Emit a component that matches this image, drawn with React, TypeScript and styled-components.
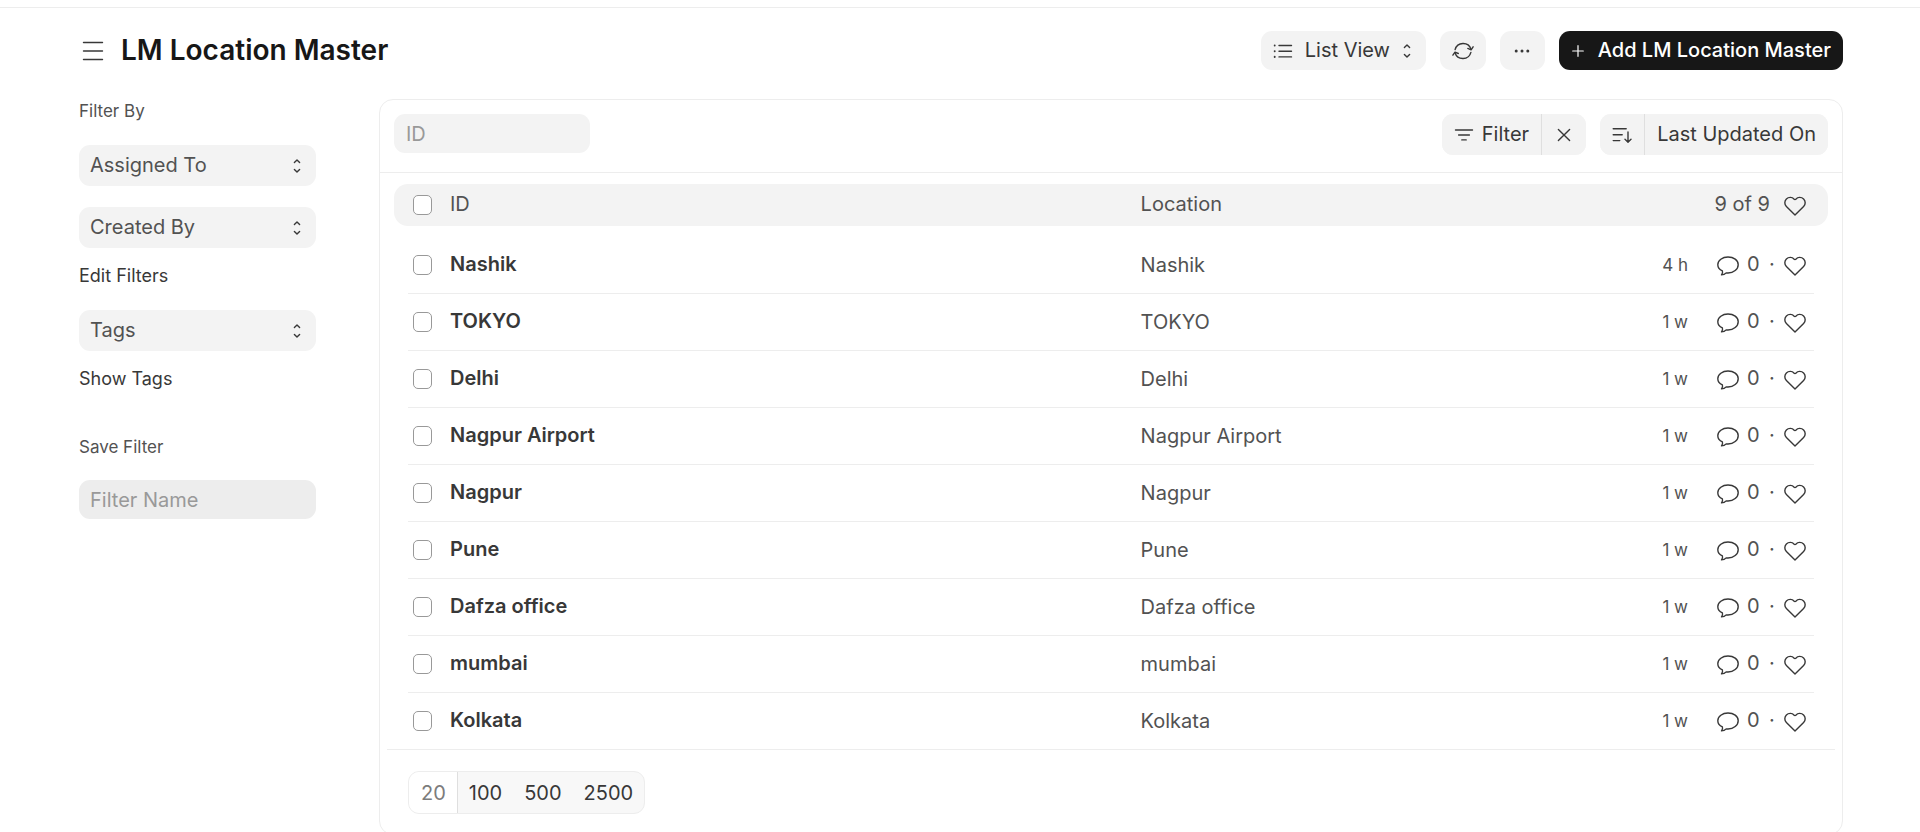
import React from "react";
import styled, { createGlobalStyle, css } from "styled-components";

const GlobalStyle = createGlobalStyle`
  *, *::before, *::after { box-sizing: border-box; }
  body {
    margin: 0;
    background: #fff;
    color: #383838;
    font-family: Inter, "Liberation Sans", sans-serif;
    font-size: 20px;
    line-height: 28px;
  }
  button, input, select { font: inherit; color: inherit; margin: 0; }
  svg { display: block; flex: none; }
`;

const Icon = styled.svg.attrs({ fill: "none", "aria-hidden": true })`
  stroke: currentColor;
  stroke-width: 1.4;
  stroke-linecap: round;
  stroke-linejoin: round;
`;

const MenuIcon = () => (
  <Icon width="22" height="22" viewBox="0 0 22 22">
    <path d="M1.5 2.5h19M1.5 11h19M1.5 19.5h19" />
  </Icon>
);

const ListIcon = () => (
  <Icon width="20" height="20" viewBox="0 0 20 20">
    <path d="M6 4.5h12.5M6 10.2h12.5M6 15.9h12.5" />
    <path d="M1.7 4.4v.2M1.7 10.1v.2M1.7 15.8v.2" strokeWidth="1.9" />
  </Icon>
);

const ChevronsIcon = () => (
  <Icon width="8" height="16" viewBox="0 0 8 16">
    <path d="M1.4 4.6 4 2l2.6 2.6M1.4 11.4 4 14l2.6-2.6" />
  </Icon>
);

const RefreshIcon = () => (
  <Icon width="22" height="22" viewBox="0 0 22 22">
    <path d="M3.1 9.6A8.3 8.3 0 0 1 19 9.2M18.9 12.4A8.3 8.3 0 0 1 3 12.8" />
    <path d="m15.8 8.4 3.3 1.4 2-3M6.3 13.5 3 12.1l-2.1 3" />
  </Icon>
);

const DotsIcon = () => (
  <Icon width="16" height="6" viewBox="0 0 16 6">
    <path d="M2.2 3h.01M8 3h.01M13.8 3h.01" strokeWidth="3" />
  </Icon>
);

const PlusIcon = () => (
  <Icon width="12" height="12" viewBox="0 0 12 12">
    <path d="M6 .7v10.6M.7 6h10.6" strokeWidth="1.2" />
  </Icon>
);

const FilterIcon = () => (
  <Icon width="20" height="14" viewBox="0 0 20 14">
    <path d="M1.5 2h17M4.6 7h10.8M7.800 11.900h4.400" />
  </Icon>
);

const CloseIcon = () => (
  <Icon width="14" height="14" viewBox="0 0 14 14">
    <path d="m1.4 1.4 11.2 11.2M12.6 1.4 1.4 12.6" />
  </Icon>
);

const SortIcon = () => (
  <Icon width="20" height="16" viewBox="0 0 20 16">
    <path d="M1.2 1.8h13M1.2 7.8h9M1.2 13.6h6.6M16 5v10M13 12.3l3 2.9 3-2.9" />
  </Icon>
);

const HeartIcon = () => (
  <Icon width="22" height="20" viewBox="0 0 22 20">
    <path d="M11 19 2.4 10.6C.3 8.5.3 5 2.4 2.9 4.6.7 8.3.9 9.9 3Q11 4.2 12.1 3C13.7.9 17.4.7 19.6 2.9c2.1 2.1 2.1 5.6 0 7.7Z" />
  </Icon>
);

const CommentIcon = () => (
  <Icon width="22" height="20" viewBox="0 0 22 20">
    <path d="M11 1C5.4 1 .8 4.4.8 8.7c0 2.7 1.8 4.900 4.600 6.200.4 1.400.2 2.800-.9 4 1.900 0 3.700-.9 4.700-2 .6.1 1.200.1 1.800.1 5.600 0 10.200-3.800 10.200-8.300S16.600 1 11 1Z" />
  </Icon>
);

const Page = styled.div`
  padding-top: 7px;
`;

const Shell = styled.div`
  border-top: 1px solid #ededed;
  padding: 23px 77px 0 79px;
`;

const PageHead = styled.header`
  display: flex;
  align-items: center;
  justify-content: space-between;
  height: 39px;
`;

const TitleGroup = styled.div`
  display: flex;
  align-items: center;
  gap: 17px;
  padding-left: 3px;
`;

const Title = styled.h1`
  margin: 0;
  padding-bottom: 2px;
  font-size: 28px;
  line-height: 36px;
  font-weight: 600;
  color: #171717;
`;

const PlainButton = styled.button`
  display: flex;
  padding: 0;
  border: 0;
  background: none;
  cursor: pointer;
`;

const Actions = styled.div`
  display: flex;
  gap: 14px;
`;

const Label = styled.span`
  padding-bottom: 2px;
`;

const control = css`
  display: flex;
  align-items: center;
  justify-content: center;
  border: 0;
  background: #f3f3f3;
  cursor: pointer;
`;

const ToolButton = styled.button<{ $primary?: boolean }>`
  ${control}
  height: 39px;
  min-width: 45px;
  gap: 14px;
  padding: 0 12px;
  border-radius: 11px;
  ${(p) =>
    p.$primary &&
    css`
      padding-left: 13px;
      background: #171717;
      color: #fff;
      font-weight: 500;
    `}
`;

const SelectBox = styled.label<{ $tall?: boolean }>`
  display: flex;
  align-items: center;
  gap: 12px;
  height: ${(p) => (p.$tall ? 41 : 39)}px;
  padding: 0 15px 0 ${(p) => (p.$tall ? 11 : 12)}px;
  border-radius: 11px;
  background: #f3f3f3;
`;

const Select = styled.select<{ $muted?: boolean }>`
  flex: 1;
  min-width: 0;
  height: 100%;
  padding: 0 0 2px;
  border: 0;
  outline: 0;
  appearance: none;
  background: none;
  color: ${(p) => (p.$muted ? "#525252" : "#383838")};
  cursor: pointer;
`;

const Layout = styled.div`
  display: grid;
  grid-template-columns: 237px minmax(0, 1fr);
  column-gap: 63px;
  align-items: start;
  padding-top: 29px;
`;

const Sidebar = styled.aside`
  display: flex;
  flex-direction: column;
`;

const SideLabel = styled.div`
  font-size: 17px;
  line-height: 24px;
  color: #525252;
`;

const SideFilters = styled.div`
  display: flex;
  flex-direction: column;
  gap: 21px;
  padding-top: 22px;
`;

const SideLink = styled.a`
  align-self: flex-start;
  padding-top: 16px;
  font-size: 18px;
  line-height: 24px;
  color: #383838;
  text-decoration: none;
`;

const SaveFilter = styled.label`
  display: flex;
  flex-direction: column;
  gap: 21px;
  padding-top: 44px;
`;

const TextInput = styled.input<{ $dark?: boolean }>`
  width: ${(p) => (p.$dark ? "100%" : "196px")};
  height: 39px;
  padding: 0 ${(p) => (p.$dark ? 11 : 12)}px;
  border: 0;
  outline: 0;
  border-radius: 11px;
  background: ${(p) => (p.$dark ? "#ededed" : "#f3f3f3")};
  &::placeholder { color: #999; opacity: 1; }
`;

const Card = styled.main`
  border: 1px solid #ededed;
  border-radius: 14px;
`;

const FilterBar = styled.div`
  display: flex;
  justify-content: space-between;
  padding: 14px 14px 17px;
  border-bottom: 1px solid #ededed;
`;

const FilterActions = styled.div`
  display: flex;
  gap: 14px;
`;

const ButtonGroup = styled.div`
  display: flex;
  height: 41px;
  border-radius: 11px;
  overflow: hidden;
  background: #f3f3f3;
`;

const GroupButton = styled.button<{ $wide?: boolean }>`
  ${control}
  gap: 8px;
  padding: 0 ${(p) => (p.$wide ? 15 : 12)}px;
  & + & { border-left: 1px solid #dfdfdf; }
`;

const rowGrid = css`
  display: grid;
  grid-template-columns: 3fr 2fr 185px;
  align-items: center;
`;

const Table = styled.table`
  display: block;
  padding: 11px 14px 0;
  text-align: left;
`;

const Head = styled.thead`
  display: block;
  padding-bottom: 11px;
`;

const HeadRow = styled.tr`
  ${rowGrid}
  height: 42px;
  padding: 0 14px;
  border-radius: 14px;
  background: #f3f3f3;
  color: #525252;
`;

const Body = styled.tbody`
  display: block;
  padding: 0 14px;
`;

const Row = styled.tr`
  ${rowGrid}
  height: 57px;
  border-bottom: 1px solid #ededed;
  &:last-child { height: 56px; border-bottom: 0; }
`;

const HeadCell = styled.th<{ $end?: boolean }>`
  display: flex;
  align-items: center;
  gap: ${(p) => (p.$end ? 14 : 18)}px;
  justify-content: ${(p) => (p.$end ? "flex-end" : "flex-start")};
  padding: 0 ${(p) => (p.$end ? 8 : 0)}px 0 0;
  font-weight: 400;
`;

const Cell = styled.td`
  padding: 0;
  color: #525252;
`;

const SubjectCell = styled.th`
  display: flex;
  align-items: center;
  gap: 18px;
  padding: 0;
  font-weight: 600;
`;

const Lead = styled.label`
  display: flex;
  padding-left: 5px;
`;

const Checkbox = styled.input.attrs({ type: "checkbox" })`
  appearance: none;
  width: 19px;
  height: 20px;
  border: 1px solid #999;
  border-radius: 5px;
  background: #fff;
  &:checked { background: #171717; }
`;

const RecordLink = styled.a`
  padding-bottom: 2px;
  color: #383838;
  text-decoration: none;
`;

const MetaCell = styled.td`
  display: grid;
  grid-template-columns: 1fr 22px 30px 15px 22px;
  align-items: center;
  padding: 0 8px 0 0;
  color: #525252;
`;

const Age = styled.span`
  padding-right: 29px;
  font-size: 17px;
  text-align: right;
`;

const Count = styled.span`
  padding: 0 0 2px 8px;
`;

const IconTone = styled.span`
  display: flex;
  padding-top: 1px;
  color: #383838;
`;

const HeartButton = styled(PlainButton)`
  padding-top: 1px;
  color: #383838;
`;

const Footer = styled.footer`
  display: flex;
  margin: 0 7px;
  padding: 21px 21px 20px;
  border-top: 1px solid #ededed;
`;

const Paging = styled.div`
  display: flex;
  height: 43px;
  border: 1px solid #ededed;
  border-radius: 11px;
  overflow: hidden;
  background: #f8f8f8;
`;

const PageSize = styled.button<{ $active?: boolean }>`
  padding: 0 11px;
  border: 0;
  background: none;
  cursor: pointer;
  ${(p) =>
    p.$active &&
    css`
      padding-left: 12px;
      border-right: 1px solid #dfdfdf;
      background: #fff;
      color: #7c7c7c;
    `}
`;

const locations = [
  { name: "Nashik", age: "4 h" },
  { name: "TOKYO", age: "1 w" },
  { name: "Delhi", age: "1 w" },
  { name: "Nagpur Airport", age: "1 w" },
  { name: "Nagpur", age: "1 w" },
  { name: "Pune", age: "1 w" },
  { name: "Dafza office", age: "1 w" },
  { name: "mumbai", age: "1 w" },
  { name: "Kolkata", age: "1 w" },
];

const pageSizes = [20, 100, 500, 2500];

function SideSelect({ label }: { label: string }) {
  return (
    <SelectBox $tall>
      <Select $muted aria-label={label}>
        <option>{label}</option>
      </Select>
      <ChevronsIcon />
    </SelectBox>
  );
}

function LocationRow({ name, age }: { name: string; age: string }) {
  return (
    <Row>
      <SubjectCell scope="row">
        <Lead>
          <Checkbox aria-label={`Select ${name}`} />
        </Lead>
        <RecordLink href="#">{name}</RecordLink>
      </SubjectCell>
      <Cell>{name}</Cell>
      <MetaCell>
        <Age>{age}</Age>
        <IconTone>
          <CommentIcon />
        </IconTone>
        <Count>0</Count>
        <Label>·</Label>
        <HeartButton type="button" aria-label={`Like ${name}`}>
          <HeartIcon />
        </HeartButton>
      </MetaCell>
    </Row>
  );
}

export default function App() {
  return (
    <Page>
      <GlobalStyle />
      <Shell>
        <PageHead>
          <TitleGroup>
            <PlainButton type="button" aria-label="Toggle sidebar">
              <MenuIcon />
            </PlainButton>
            <Title>LM Location Master</Title>
          </TitleGroup>
          <Actions>
            <SelectBox>
              <ListIcon />
              <Select aria-label="View">
                <option>List View</option>
              </Select>
              <ChevronsIcon />
            </SelectBox>
            <ToolButton type="button" aria-label="Refresh">
              <RefreshIcon />
            </ToolButton>
            <ToolButton type="button" aria-label="Menu">
              <DotsIcon />
            </ToolButton>
            <ToolButton type="button" $primary>
              <PlusIcon />
              <Label>Add LM Location Master</Label>
            </ToolButton>
          </Actions>
        </PageHead>

        <Layout>
          <Sidebar>
            <SideLabel>Filter By</SideLabel>
            <SideFilters>
              <SideSelect label="Assigned To" />
              <SideSelect label="Created By" />
            </SideFilters>
            <SideLink href="#">Edit Filters</SideLink>
            <SideFilters>
              <SideSelect label="Tags" />
            </SideFilters>
            <SideLink href="#">Show Tags</SideLink>
            <SaveFilter>
              <SideLabel as="span">Save Filter</SideLabel>
              <TextInput $dark type="text" placeholder="Filter Name" />
            </SaveFilter>
          </Sidebar>

          <Card>
            <FilterBar>
              <TextInput type="text" placeholder="ID" aria-label="ID" />
              <FilterActions>
                <ButtonGroup>
                  <GroupButton type="button">
                    <FilterIcon />
                    <Label>Filter</Label>
                  </GroupButton>
                  <GroupButton type="button" $wide aria-label="Clear filters">
                    <CloseIcon />
                  </GroupButton>
                </ButtonGroup>
                <ButtonGroup>
                  <GroupButton type="button" aria-label="Sort descending">
                    <SortIcon />
                  </GroupButton>
                  <GroupButton type="button">
                    <Label>Last Updated On</Label>
                  </GroupButton>
                </ButtonGroup>
              </FilterActions>
            </FilterBar>

            <Table>
              <Head>
                <HeadRow>
                  <HeadCell scope="col">
                    <Lead>
                      <Checkbox aria-label="Select all" />
                    </Lead>
                    <Label>ID</Label>
                  </HeadCell>
                  <HeadCell scope="col">
                    <Label>Location</Label>
                  </HeadCell>
                  <HeadCell scope="col" $end>
                    <Label>9 of 9</Label>
                    <HeartButton type="button" aria-label="Show liked">
                      <HeartIcon />
                    </HeartButton>
                  </HeadCell>
                </HeadRow>
              </Head>
              <Body>
                {locations.map((l) => (
                  <LocationRow key={l.name} {...l} />
                ))}
              </Body>
            </Table>

            <Footer>
              <Paging>
                {pageSizes.map((n) => (
                  <PageSize key={n} type="button" $active={n === 20}>
                    {n}
                  </PageSize>
                ))}
              </Paging>
            </Footer>
          </Card>
        </Layout>
      </Shell>
    </Page>
  );
}
